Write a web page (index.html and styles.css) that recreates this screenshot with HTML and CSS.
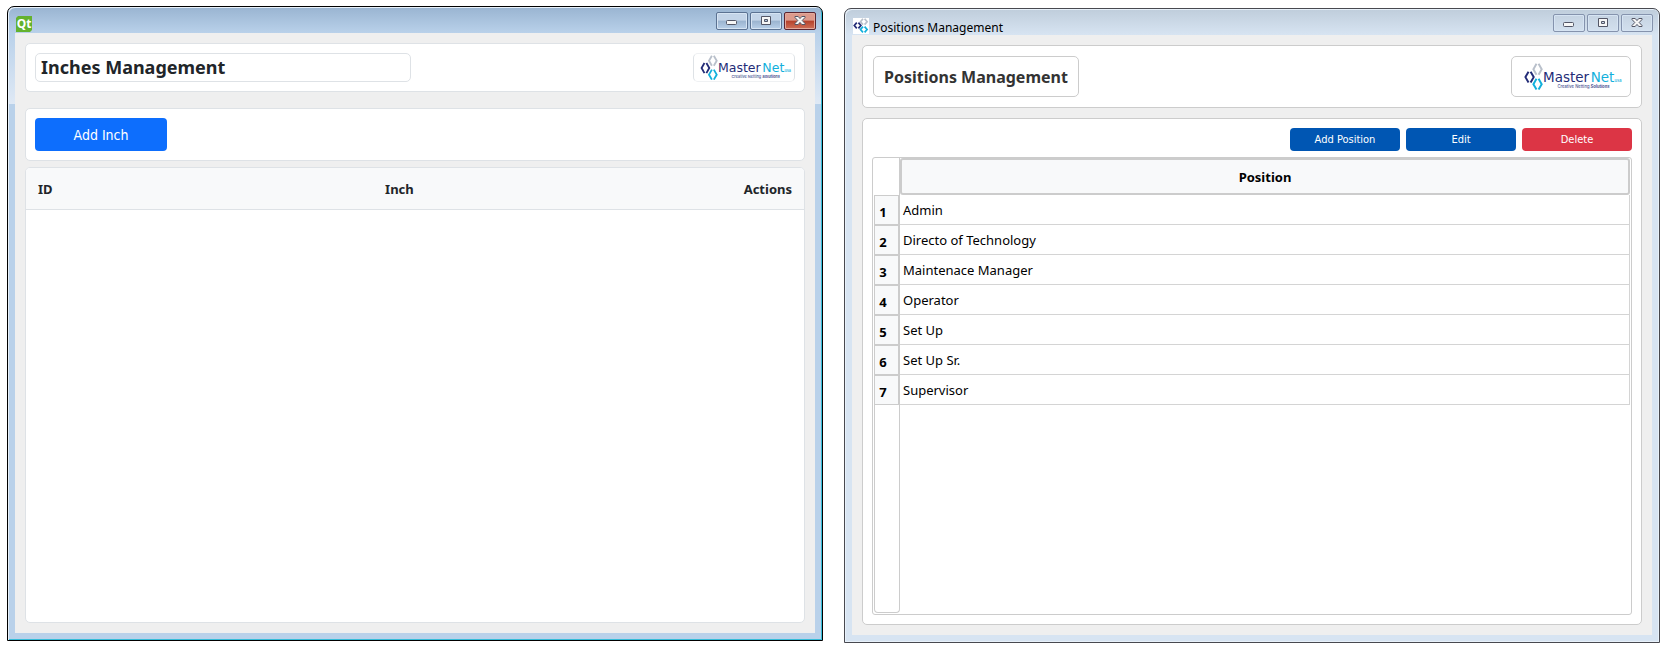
FILE: index.html
```html
<!DOCTYPE html>
<html lang="en">
<head>
<meta charset="utf-8">
<title>Positions Management</title>
<link rel="stylesheet" href="styles.css">
</head>
<body>
<svg class="defs" aria-hidden="true">
  <symbol id="mark" viewBox="0 0 16 16">
    <g fill="none" stroke-width="1.700">
      <path stroke="#b9c0cb" d="M10 .8 7.500 3.700 10 6.600M11.600.8l2.500 2.900-2.500 2.900"/>
      <path stroke="#232c77" d="M3.800 4.600 1.300 7.500l2.500 2.900M5.400 4.600l2.500 2.900-2.500 2.900"/>
      <path stroke="#12b0dc" d="M10 8.600 7.500 11.500 10 14.400M11.600 8.600l2.500 2.900-2.500 2.900"/>
    </g>
  </symbol>
  <symbol id="logo" viewBox="0 0 100 28">
    <g fill="none" stroke-width="1.900">
      <path stroke="#b9c0cb" d="M16.700 1.800 13.700 7l3 5.200M18.700 1.800l3 5.200-3 5.200"/>
      <path stroke="#232c77" d="M9 9.400 6 14.600l3 5.200M11 9.400l3 5.200-3 5.200"/>
      <path stroke="#12b0dc" d="M16.700 16.200 13.700 21.400l3 5.200M18.700 16.200l3 5.200-3 5.200"/>
    </g>
    <text class="logo-word" x="23" y="19" fill="#232c77">Master</text>
    <text class="logo-word" x="69" y="19" fill="#12b0dc">Net</text>
    <text class="logo-tag" x="92" y="19" fill="#12b0dc">usa</text>
    <text class="logo-tag" x="37" y="25" fill="#4a5390">Creative Netting <tspan font-style="italic" font-weight="700">Solutions</tspan></text>
  </symbol>
  <symbol id="min" viewBox="0 0 12 12"><rect x=".5" y="5.500" width="10" height="4" rx="1" fill="#f6f6f6" stroke="#535666"/></symbol>
  <symbol id="max" viewBox="0 0 12 12"><path fill="#f6f6f6" stroke="#535666" fill-rule="evenodd" d="M1.500 1.500h9v8h-9zM4.500 4.500v2h3v-2z"/></symbol>
  <symbol id="close" viewBox="0 0 12 12"><path fill="#f6f6f6" stroke="#535666" d="M1 1.500h3.200L6 3.600l1.800-2.100H11v1L8.200 5.500 11 8.500v1H7.800L6 7.400 4.200 9.500H1v-1l2.800-3L1 2.500z"/></symbol>
</svg>

<section class="window active" aria-label="Inches Management">
  <header class="titlebar">
    <svg class="app-icon" viewBox="0 0 16 16" role="img" aria-label="Qt"><path fill="#64b22e" d="M2 0h14v14l-2 2H0V2z"/><text class="qt" x="8" y="12" text-anchor="middle" fill="#fff">Qt</text></svg>
    <div class="controls">
      <button type="button" aria-label="Minimize"><svg><use href="#min"/></svg></button>
      <button type="button" aria-label="Maximize"><svg><use href="#max"/></svg></button>
      <button type="button" class="close" aria-label="Close"><svg><use href="#close"/></svg></button>
    </div>
  </header>
  <main class="client inches">
    <div class="card heading">
      <h1>Inches Management</h1>
      <div class="logo-box"><svg class="logo" role="img" aria-label="MasterNet Creative Netting Solutions"><use href="#logo"/></svg></div>
    </div>
    <div class="card toolbar"><button type="button" class="btn add">Add Inch</button></div>
    <div class="card list">
      <table>
        <thead><tr><th scope="col">ID</th><th scope="col">Inch</th><th scope="col">Actions</th></tr></thead>
        <tbody></tbody>
      </table>
    </div>
  </main>
</section>

<section class="window inactive" aria-label="Positions Management">
  <header class="titlebar">
    <svg class="app-icon mark-icon" viewBox="0 0 16 16" aria-hidden="true"><use href="#mark"/></svg>
    <span class="caption">Positions Management</span>
    <div class="controls">
      <button type="button" aria-label="Minimize"><svg><use href="#min"/></svg></button>
      <button type="button" aria-label="Maximize"><svg><use href="#max"/></svg></button>
      <button type="button" aria-label="Close"><svg><use href="#close"/></svg></button>
    </div>
  </header>
  <main class="client positions">
    <div class="card heading">
      <h1>Positions Management</h1>
      <div class="logo-box"><svg class="logo" role="img" aria-label="MasterNet Creative Netting Solutions"><use href="#logo"/></svg></div>
    </div>
    <div class="card body">
      <div class="actions">
        <button type="button" class="btn">Add Position</button>
        <button type="button" class="btn">Edit</button>
        <button type="button" class="btn danger">Delete</button>
      </div>
      <div class="grid">
        <table>
          <thead><tr><td></td><th scope="col">Position</th></tr></thead>
          <tbody>
            <tr><th scope="row">1</th><td>Admin</td></tr>
            <tr><th scope="row">2</th><td>Directo of Technology</td></tr>
            <tr><th scope="row">3</th><td>Maintenace Manager</td></tr>
            <tr><th scope="row">4</th><td>Operator</td></tr>
            <tr><th scope="row">5</th><td>Set Up</td></tr>
            <tr><th scope="row">6</th><td>Set Up Sr.</td></tr>
            <tr><th scope="row">7</th><td>Supervisor</td></tr>
          </tbody>
        </table>
        <div class="gutter"></div>
      </div>
    </div>
  </main>
</section>
</body>
</html>
```
FILE: styles.css
```css
* { box-sizing: border-box; }

body {
  margin: 0;
  min-height: 100vh;
  padding: 6px 5px 7px 7px;
  display: flex;
  gap: 21px;
  background: #fff;
  color: #000;
  font: 13px/18px "Noto Sans", "Open Sans", sans-serif;
}

.defs { display: none; }

/* Window frame */
.window {
  flex: 1;
  min-width: 0;
  display: flex;
  flex-direction: column;
  padding: 0 7px 7px;
  border: 1px solid #000;
  border-radius: 7px 7px 0 0;
}
.active {
  margin-bottom: 2px;
  background: linear-gradient(#99b4d1, #b9d1ea 26px, #dfe9f5 97px, #b9d1ea 97px);
  box-shadow: inset 1px 1px #e8f1fa, inset -1px -1px #35bcd8;
}
.inactive {
  margin-top: 2px;
  border-color: #484950;
  background: linear-gradient(#bfcddb, #d7e4f2 26px);
  box-shadow: inset 1px 1px #e8f1fa, inset -1px -1px #e8f1fa;
}
.titlebar {
  height: 26px;
  display: flex;
  align-items: flex-start;
}
.app-icon {
  width: 16px;
  height: 16px;
  margin: 9px 4px 0 1px;
}
.qt { font: 700 12px "Noto Sans", sans-serif; }
.mark-icon { background: #fff; }
.caption {
  padding-top: 10px;
  font-size: 12px;
}
.controls {
  margin: 0 -1px 0 auto;
  padding-top: 5px;
  display: flex;
  gap: 2px;
}
.controls button {
  width: 32px;
  height: 18px;
  padding: 0;
  display: grid;
  place-items: center;
  border: 1px solid #5b7292;
  border-radius: 2px;
  background: linear-gradient(#c3d4e8 45%, #9ab3cf 50%, #b9d0e9);
  box-shadow: inset 0 0 0 1px #d6e4f3;
}
.controls svg { width: 12px; height: 12px; }
.inactive .controls button {
  border-color: #8593ad;
  background: linear-gradient(#c5d3e2, #d3e0ee);
}
.controls .close {
  border-color: #5a2430;
  background: linear-gradient(#dd9a8c 45%, #b5412b 50%, #cf7059);
  box-shadow: inset 0 0 0 1px #e2a99c;
}

/* Shared client area */
.client {
  flex: 1;
  display: flex;
  flex-direction: column;
  padding: 10px;
  background: #efefef;
}
.card {
  border: 1px solid #dee2e6;
  border-radius: 5px;
  background: #fff;
}
.heading {
  display: flex;
  justify-content: space-between;
}
h1 {
  margin: 0;
  border: 1px solid #dee2e6;
  border-radius: 5px;
  font-family: "Noto Sans", "Open Sans", sans-serif;
  font-weight: 700;
}
.logo { display: block; width: 100%; height: 27px; }
.logo-word { font: 13px "DejaVu Sans", sans-serif; }
.logo-tag { font: 500 4px Inter, sans-serif; }
.btn {
  padding: 0;
  border: 0;
  border-radius: 4px;
  color: #fff;
  background: #0056b3;
  font: 11px/16px "DejaVu Sans Condensed", "DejaVu Sans", sans-serif;
}
table {
  width: 100%;
  table-layout: fixed;
  border-collapse: separate;
  border-spacing: 0;
}

/* Inches window */
.inches .heading { padding: 9px; margin-bottom: 16px; }
.inches h1 {
  width: 49.5%;
  padding: 1px 5px;
  color: #212529;
  font-size: 18px;
  line-height: 25px;
}
.inches .logo-box {
  width: 102px;
  height: 29px;
  border: 1px solid #dee2e6;
  border-top-color: #eff1f3;
  border-bottom-color: #eff1f3;
  border-radius: 5px;
}
.toolbar { padding: 9px; height: 53px; margin-bottom: 6px; }
.add {
  width: 132px;
  height: 33px;
  background: #0d6efd;
  font-size: 14px;
}
.list { flex: 1; overflow: hidden; }
.list th {
  height: 42px;
  padding: 0 12px;
  border-bottom: 1px solid #dee2e6;
  background: #f8f9fa;
  color: #212529;
}
.list th:first-child { width: 34%; text-align: left; }
.list th:nth-child(2) { width: 28%; }
.list th:last-child { text-align: right; }

/* Positions window */
.positions .card, .positions h1, .positions .logo-box { border-color: #ccc; }
.positions .heading { padding: 10px; margin-bottom: 10px; }
.positions h1 {
  padding: 8px 10px 6px;
  color: #333;
  font-size: 16px;
  line-height: 25px;
}
.positions .logo-box {
  width: 120px;
  padding: 5px;
  border: 1px solid #ccc;
  border-radius: 5px;
}
.positions .logo { height: 29px; }
.body {
  flex: 1;
  display: flex;
  flex-direction: column;
  gap: 6px;
  padding: 9px;
}
.actions { display: flex; justify-content: flex-end; gap: 6px; }
.actions .btn { width: 110px; height: 23px; }
.danger { background: #dc3545; }
.grid {
  flex: 1;
  display: flex;
  flex-direction: column;
  padding: 0 1px 1px;
  border: 1px solid #ccc;
  border-radius: 3px;
}
.grid thead td { width: 26px; border-right: 1px solid #ccc; }
.grid th {
  border: 1px solid #ccc;
  background: #f8f9fa;
}
.grid thead th {
  height: 37px;
  padding: 0;
  border-width: 2px;
  border-radius: 3px;
}
.grid tbody th {
  height: 30px;
  padding: 3px 7px 0 0;
  border-width: 1px 2px 1px 1px;
}
.grid tbody td {
  padding: 0 3px;
  border: solid #d4d4d4;
  border-width: 0 1px 1px 0;
}
.gutter {
  flex: 1;
  width: 26px;
  border: solid #ccc;
  border-width: 0 1px 1px;
  border-radius: 0 0 4px 4px;
}
```
